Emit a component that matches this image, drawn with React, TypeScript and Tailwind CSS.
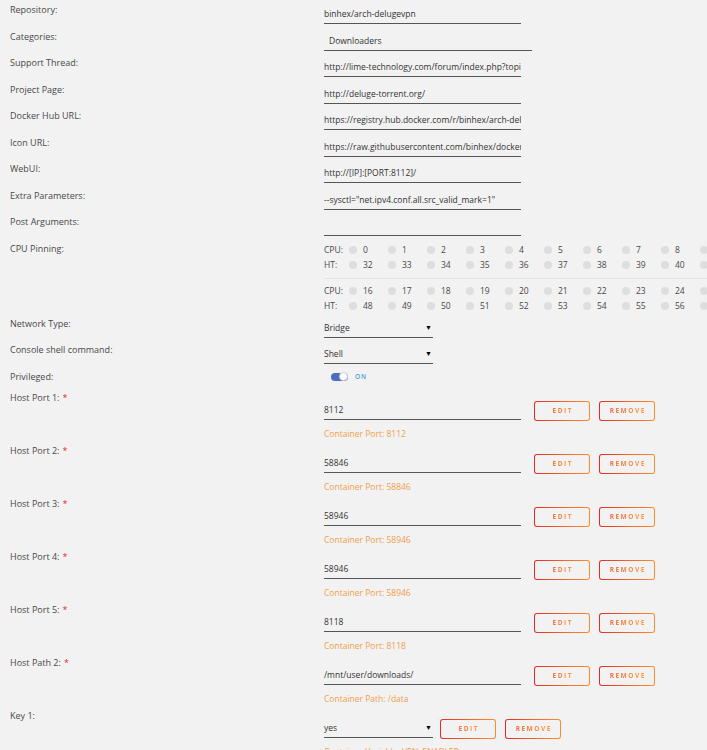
import React from "react"

const font = { fontFamily: '"Open Sans", "Noto Sans", sans-serif' }

const simpleRows = [
  { label: "Repository:", value: "binhex/arch-delugevpn" },
  { label: "Categories:", value: "Downloaders", wide: true },
  { label: "Support Thread:", value: "http://lime-technology.com/forum/index.php?topic=45812.0" },
  { label: "Project Page:", value: "http://deluge-torrent.org/" },
  { label: "Docker Hub URL:", value: "https://registry.hub.docker.com/r/binhex/arch-delugevpn/" },
  { label: "Icon URL:", value: "https://raw.githubusercontent.com/binhex/docker-templates/master/binhex/images/deluge-icon.png" },
  { label: "WebUI:", value: "http://[IP]:[PORT:8112]/" },
  { label: "Extra Parameters:", value: '--sysctl="net.ipv4.conf.all.src_valid_mark=1"' },
  { label: "Post Arguments:", value: "" }
]

const hostRows = [
  { label: "Host Port 1:", value: "8112", note: "Container Port: 8112" },
  { label: "Host Port 2:", value: "58846", note: "Container Port: 58846" },
  { label: "Host Port 3:", value: "58946", note: "Container Port: 58946" },
  { label: "Host Port 4:", value: "58946", note: "Container Port: 58946" },
  { label: "Host Port 5:", value: "8118", note: "Container Port: 8118" },
  { label: "Host Path 2:", value: "/mnt/user/downloads/", note: "Container Path: /data" }
]

function Label({ children, required }: { children: React.ReactNode; required?: boolean }) {
  return (
    <div className="w-[324px] shrink-0 pl-[10px] text-[9px] leading-[12px] text-[#484848]">
      {children}
      {required && <span className="ml-[3px] text-[#e22d2d]">*</span>}
    </div>
  )
}

function Select({ value }: { value: string }) {
  return (
    <div className="flex h-[20px] w-[109px] items-start justify-between border-b border-[#555] pt-[4px] text-[8.5px] leading-[12px] text-[#333]">
      <span>{value}</span>
      <span className="pr-[1px] text-[7px] text-black">▼</span>
    </div>
  )
}

function GradButton({ children }: { children: React.ReactNode }) {
  return (
    <div className="h-[20px] w-[56px] rounded-[3px] bg-gradient-to-r from-[#e22828] to-[#ff8c2f] p-px">
      <div className="flex h-full w-full items-center justify-center rounded-[2px] bg-[#f2f2f2]">
        <span className="bg-gradient-to-r from-[#ef6a3a] to-[#ff9a45] bg-clip-text pl-[1.5px] text-[6.5px] font-bold tracking-[1.5px] text-transparent">
          {children}
        </span>
      </div>
    </div>
  )
}

function CpuRow({ label, nums }: { label: string; nums: number[] }) {
  return (
    <div className="flex h-[15px] items-center text-[8.5px] text-[#484848]">
      <span className="w-[25px] shrink-0">{label}</span>
      {nums.map((n) => (
        <div key={n} className="flex w-[39px] shrink-0 items-center">
          <span className="h-[8px] w-[8px] rounded-full bg-[#dedede]" />
          <span className="ml-[6px]">{n}</span>
        </div>
      ))}
    </div>
  )
}

const range = (a: number) => Array.from({ length: 10 }, (_, i) => a + i)

export default function App() {
  return (
    <div className="min-h-[750px] w-[707px] overflow-hidden bg-[#f2f2f2] pt-[4px]" style={font}>
      {simpleRows.map((r) => (
        <div key={r.label} className="flex h-[26.5px]">
          <Label>{r.label}</Label>
          <div
            className={
              "h-[20px] overflow-hidden whitespace-nowrap border-b border-[#555] pt-[4px] text-[8.5px] leading-[12px] text-[#333] " +
              (r.wide ? "w-[208px] pl-[5px]" : "w-[197px]")
            }
          >
            {r.value}
          </div>
        </div>
      ))}

      {/* cpu pinning */}
      <div className="flex h-[75px]">
        <Label>CPU Pinning:</Label>
        <div className="flex-1 overflow-hidden">
          <CpuRow label="CPU:" nums={range(0)} />
          <CpuRow label="HT:" nums={range(32)} />
          <div className="my-[5px] h-px w-[400px] bg-[#e4e4e4]" />
          <CpuRow label="CPU:" nums={range(16)} />
          <CpuRow label="HT:" nums={range(48)} />
        </div>
      </div>

      <div className="flex h-[26.5px]">
        <Label>Network Type:</Label>
        <Select value="Bridge" />
      </div>
      <div className="flex h-[26.5px]">
        <Label>Console shell command:</Label>
        <Select value="Shell" />
      </div>
      <div className="flex h-[21px]">
        <Label>Privileged:</Label>
        <div className="flex h-[12px] items-center pl-[7px]">
          <div className="relative h-[8px] w-[17px] rounded-full bg-[#4a6fc0]">
            <span className="absolute right-0 top-[-0.5px] h-[9px] w-[9px] rounded-full border border-[#ccc] bg-white" />
          </div>
          <span className="ml-[7px] text-[6.5px] font-semibold tracking-[1px] text-[#4aa0dc]">ON</span>
        </div>
      </div>

      {hostRows.map((r) => (
        <div key={r.label} className="flex h-[53px]">
          <Label required>{r.label}</Label>
          <div className="pt-[8px]">
            <div className="flex items-start">
              <div className="h-[20px] w-[197px] border-b border-[#555] pt-[4px] text-[8.5px] leading-[12px] text-[#333]">
                {r.value}
              </div>
              <div className="ml-[13px] mt-[1px] flex gap-[9px]">
                <GradButton>EDIT</GradButton>
                <GradButton>REMOVE</GradButton>
              </div>
            </div>
            <div className="mt-[7px] text-[8.5px] leading-[12px] text-[#f0a04b]">{r.note}</div>
          </div>
        </div>
      ))}

      <div className="flex h-[53px]">
        <Label>Key 1:</Label>
        <div className="pt-[8px]">
          <div className="flex items-start">
            <Select value="yes" />
            <div className="ml-[7px] mt-[1px] flex gap-[9px]">
              <GradButton>EDIT</GradButton>
              <GradButton>REMOVE</GradButton>
            </div>
          </div>
          <div className="mt-[7px] text-[8.5px] leading-[12px] text-[#f0a04b]">Container Variable: VPN_ENABLED</div>
        </div>
      </div>
    </div>
  )
}
